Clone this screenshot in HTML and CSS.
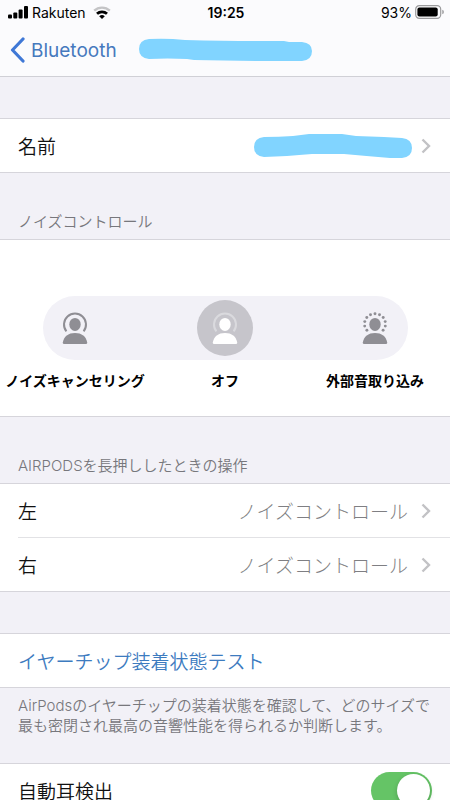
FILE: index.html
```html
<!DOCTYPE html>
<html lang="ja">
<head>
<meta charset="utf-8">
<meta name="viewport" content="width=device-width, initial-scale=1">
<title>Bluetooth</title>
<link rel="stylesheet" href="styles.css">
</head>
<body>
<div class="screen">
  <header class="top">
    <div class="status">
      <div class="status-side">
        <svg class="signal" width="20" height="13" viewBox="0 0 20 13" aria-hidden="true">
          <rect x="0" y="8.500" width="4" height="4" rx="1"/><rect x="5.300" y="6.500" width="4" height="6" rx="1"/><rect x="10.600" y="3.500" width="4" height="9" rx="1"/><rect x="16" y="0" width="4" height="12.500" rx="1"/>
        </svg>
        <span>Rakuten</span>
        <svg class="wifi" width="18" height="13" viewBox="0 0 18 13" aria-hidden="true">
          <path d="M1.200 4.700A11.400 11.400 0 0 1 16.800 4.700" fill="none" stroke="#c4c4c6" stroke-width="2.400"/>
          <path d="M4 7.800A7.300 7.300 0 0 1 14 7.800" fill="none" stroke="#000" stroke-width="2.800"/>
          <path d="M9 13L6.200 10.200Q9 8 11.800 10.200Z"/>
        </svg>
      </div>
      <time class="clock">19:25</time>
      <div class="status-side status-end">
        <span>93%</span>
        <svg width="29" height="14" viewBox="0 0 29 14" aria-hidden="true">
          <rect x="0.700" y="0.700" width="25" height="12.600" rx="3.600" fill="none" stroke="#9b9b9d" stroke-width="1.200"/>
          <rect x="2.400" y="2.400" width="20.300" height="9.200" rx="2"/>
          <path d="M27.200 4.700Q29 5.300 29 7T27.200 9.300Z" fill="#a5a5a7"/>
        </svg>
      </div>
    </div>
    <nav class="nav">
      <a class="back" href="#">
        <svg width="15" height="26" viewBox="0 0 15 26" aria-hidden="true"><path d="M13 2L2.500 13L13 24" fill="none" stroke="#3f78d6" stroke-width="3.200" stroke-linecap="round" stroke-linejoin="round"/></svg>
        <span>Bluetooth</span>
      </a>
      <svg class="title-mark" width="173" height="24" viewBox="0 0 173 24" aria-hidden="true"><path d="M10 1Q28 0 46 2Q88 3 125 3H145L150 4H163Q173 5 173 13Q173 22 163 23H144Q95 23 55 22L48 21Q28 20 10 21Q0 20 0 11Q0 2 10 1Z"/></svg>
    </nav>
  </header>

  <main>
    <section class="card spaced">
      <a class="row" href="#">
        <span>名前</span>
        <svg class="name-mark" width="158" height="24" viewBox="0 0 158 24" aria-hidden="true"><path d="M10 3Q25 3 39 2L55 0H88L102 2L130 3L148 4Q158 5 158 14Q158 23 148 24H136Q112 22 90 20H58Q45 21 33 22L10 23Q0 22 0 13Q0 4 10 3Z"/></svg>
        <svg class="chevron" width="10" height="16" viewBox="0 0 10 16" aria-hidden="true"><path d="M1.500 1.500L8 8L1.500 14.500"/></svg>
      </a>
    </section>

    <h2 class="heading" id="noise">ノイズコントロール</h2>
    <section class="card">
      <div class="modes" role="radiogroup" aria-labelledby="noise">
        <label class="mode">
          <input type="radio" name="mode">
          <span class="disc">
            <svg width="26" height="32" viewBox="0 0 26 32" aria-hidden="true">
              <path d="M4.400 19.400A11 11 0 1 1 21.600 19.400" fill="none" stroke="currentColor" stroke-width="2"/>
              <ellipse cx="13" cy="12.400" rx="5.700" ry="6.500"/><path d="M1.800 32Q.6 32 .8 30.600C1.800 24.300 6.300 21 13 21S24.200 24.300 25.200 30.600Q25.400 32 24.200 32Z"/>
            </svg>
          </span>
          <span class="caption">ノイズキャンセリング</span>
        </label>
        <label class="mode">
          <input type="radio" name="mode" checked>
          <span class="disc">
            <svg width="26" height="32" viewBox="0 0 26 32" aria-hidden="true">
              <path d="M4.400 19.400A11 11 0 1 1 21.600 19.400" fill="none" stroke="#dadade" stroke-width="2"/>
              <ellipse cx="13" cy="12.400" rx="5.700" ry="6.500"/><path d="M1.800 32Q.6 32 .8 30.600C1.800 24.300 6.300 21 13 21S24.200 24.300 25.200 30.600Q25.400 32 24.200 32Z"/>
            </svg>
          </span>
          <span class="caption">オフ</span>
        </label>
        <label class="mode">
          <input type="radio" name="mode">
          <span class="disc">
            <svg width="26" height="32" viewBox="0 0 26 32" aria-hidden="true">
              <circle cx="13" cy="1.700" r="1.450"/><circle cx="8.500" cy="2.700" r="1.450"/><circle cx="17.500" cy="2.700" r="1.450"/><circle cx="4.800" cy="5.500" r="1.450"/><circle cx="21.200" cy="5.500" r="1.450"/><circle cx="2.800" cy="9.600" r="1.450"/><circle cx="23.200" cy="9.600" r="1.450"/><circle cx="2.700" cy="14.100" r="1.450"/><circle cx="23.300" cy="14.100" r="1.450"/><circle cx="4.900" cy="18.300" r="1.450"/><circle cx="21.100" cy="18.300" r="1.450"/>
              <ellipse cx="13" cy="12.400" rx="5.700" ry="6.500"/><path d="M1.800 32Q.6 32 .8 30.600C1.800 24.300 6.300 21 13 21S24.200 24.300 25.200 30.600Q25.400 32 24.200 32Z"/>
            </svg>
          </span>
          <span class="caption">外部音取り込み</span>
        </label>
      </div>
    </section>

    <h2 class="heading">AIRPODSを長押ししたときの操作</h2>
    <section class="card">
      <a class="row" href="#">
        <span>左</span><span class="value">ノイズコントロール</span>
        <svg class="chevron" width="10" height="16" viewBox="0 0 10 16" aria-hidden="true"><path d="M1.500 1.500L8 8L1.500 14.500"/></svg>
      </a>
      <a class="row" href="#">
        <span>右</span><span class="value">ノイズコントロール</span>
        <svg class="chevron" width="10" height="16" viewBox="0 0 10 16" aria-hidden="true"><path d="M1.500 1.500L8 8L1.500 14.500"/></svg>
      </a>
    </section>

    <section class="card spaced">
      <button class="row action" type="button">イヤーチップ装着状態テスト</button>
    </section>
    <p class="note">AirPodsのイヤーチップの装着状態を確認して、どのサイズで最も密閉され最高の音響性能を得られるか判断します。</p>

    <section class="card">
      <label class="row toggle-row">
        <span>自動耳検出</span>
        <input class="toggle" type="checkbox" role="switch" checked>
      </label>
    </section>
  </main>
</div>
</body>
</html>
```
FILE: styles.css
```css
* {
  box-sizing: border-box;
}

body {
  margin: 0;
  background: #f2f1f7;
  color: #111;
  font-family: Inter, "Noto Sans CJK JP", sans-serif;
  font-size: 19px;
}

.screen {
  height: 100vh;
  overflow: hidden;
}

.top {
  background: #fbfbfd;
  border-bottom: 1px solid #d0d0d6;
}

.status {
  display: grid;
  grid-template-columns: 1fr auto 1fr;
  align-items: center;
  height: 24px;
  padding: 0 6px 0 8px;
  color: #000;
  font-size: 14px;
}

.status-side {
  display: flex;
  align-items: center;
  gap: 4px;
}

.status-end {
  gap: 3px;
  justify-content: flex-end;
}

.wifi {
  margin-left: 3px;
}

.clock {
  font-weight: 600;
}

.nav {
  display: flex;
  align-items: center;
  gap: 22px;
  height: 52px;
  padding: 0 10px;
}

.back {
  display: flex;
  align-items: center;
  gap: 6px;
  color: #4679bd;
  text-decoration: none;
}

.title-mark,
.name-mark {
  fill: #81d4ff;
}

.card {
  background: #fff;
  border-top: 1px solid #d6d5db;
  border-bottom: 1px solid #d6d5db;
}

.spaced {
  margin-top: 41px;
}

.row {
  display: flex;
  align-items: center;
  gap: 9px;
  width: 100%;
  height: 53px;
  padding: 0 19px 0 18px;
  border: 0;
  background: none;
  color: inherit;
  font: inherit;
  font-weight: 350;
  text-decoration: none;
}

.row + .row {
  height: 54px;
  border-top: 1px solid #e2e2e5;
  margin-left: 18px;
  padding-left: 0;
  width: auto;
}

.value,
.name-mark {
  margin-left: auto;
}

.value {
  color: #7f7f83;
  font-weight: 300;
  margin-right: 4px;
}

.chevron {
  fill: none;
  stroke: #c2c2c5;
  stroke-width: 2.4px;
}

.action {
  color: #3d7bbf;
}

.heading {
  display: flex;
  align-items: flex-end;
  height: 66px;
  margin: 0;
  padding: 0 18px 7px;
  color: #77777c;
  font-size: 15px;
  font-weight: 350;
  line-height: 20px;
}

.modes {
  position: relative;
  display: grid;
  grid-template-columns: repeat(3, 1fr);
  padding: 56px 0 25px;
}

.modes::before {
  content: "";
  position: absolute;
  top: 56px;
  left: 43px;
  right: 42px;
  height: 64px;
  border-radius: 32px;
  background: #f2f1f7;
}

.mode {
  position: relative;
  display: flex;
  flex-direction: column;
  align-items: center;
}

.mode input {
  position: absolute;
  opacity: 0;
}

.disc {
  display: grid;
  place-items: center;
  width: 56px;
  height: 56px;
  margin: 4px 0;
  border-radius: 50%;
  color: #8f8e94;
  fill: currentColor;
}

.mode input:checked + .disc {
  background: #c6c5cb;
  color: #fff;
}

.caption {
  margin-top: 11px;
  color: #000;
  font-size: 14px;
  font-weight: 700;
  line-height: 20px;
  white-space: nowrap;
}

.note {
  height: 75px;
  margin: 0;
  padding: 8px 12px 0 18px;
  color: #77777c;
  font-size: 15px;
  font-weight: 350;
  line-height: 20px;
}

.toggle-row {
  padding-right: 18px;
}

.toggle {
  appearance: none;
  display: flex;
  justify-content: flex-end;
  width: 61px;
  height: 37px;
  margin: 0 0 0 auto;
  padding: 2px;
  border-radius: 19px;
  background: #65c466;
}

.toggle::before {
  content: "";
  width: 33px;
  height: 33px;
  border-radius: 50%;
  background: #fff;
  box-shadow: 0 2px 5px rgba(0, 0, 0, 0.2);
}
```
